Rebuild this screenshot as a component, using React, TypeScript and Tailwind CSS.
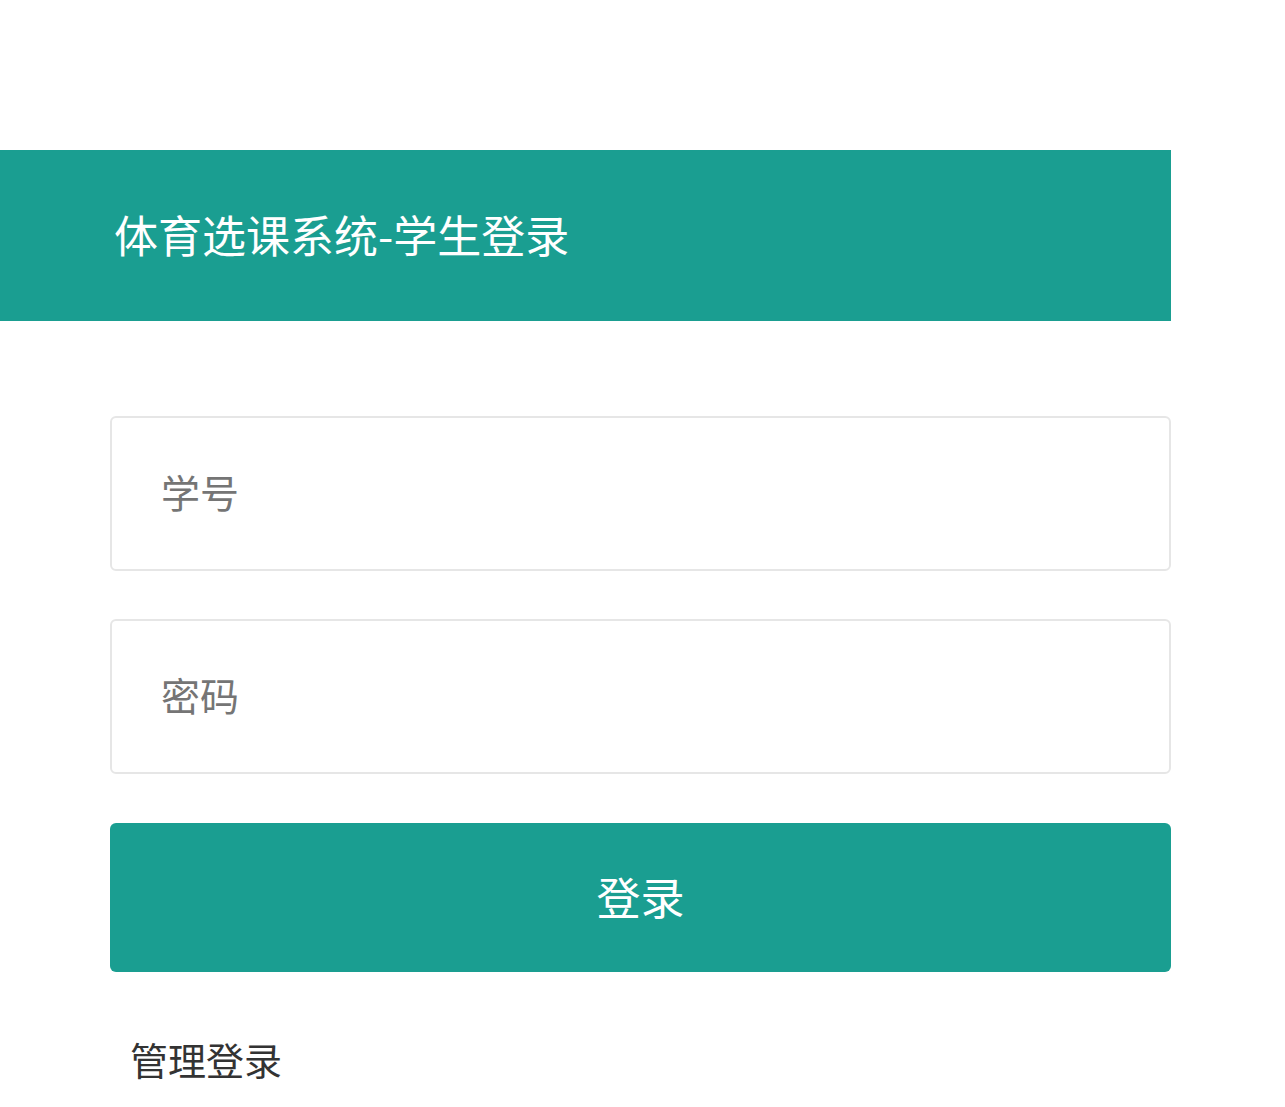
export default function App() {
  return (
    <div
      className="min-h-[1107px] bg-white pt-[150px]"
      style={{ fontFamily: '"Noto Sans CJK SC", "Liberation Sans", sans-serif' }}
    >
      <div className="w-[1171px]">
        <div className="flex h-[171px] items-center bg-[#1a9e91] pl-[114px]">
          <h1 className="-mt-[3px] text-[44px] leading-none text-white">体育选课系统-学生登录</h1>
        </div>

        <form className="ml-[110px] mt-[95px] flex flex-col" onSubmit={(e) => e.preventDefault()}>
          <input
            type="text"
            placeholder="学号"
            className="h-[155px] rounded-[6px] border-2 border-[#e6e6e6] pb-[6px] pl-[49px] text-[39px] text-[#333] outline-none placeholder:text-[#757575]"
          />
          <input
            type="password"
            placeholder="密码"
            className="mt-[48px] h-[155px] rounded-[6px] border-2 border-[#e6e6e6] pb-[6px] pl-[49px] text-[39px] text-[#333] outline-none placeholder:text-[#757575]"
          />
          <button
            type="submit"
            className="mt-[49px] h-[149px] rounded-[6px] bg-[#1a9e91] pb-[4px] text-[44px] text-white"
          >
            登录
          </button>
          <a href="#" className="ml-[20px] mt-[68px] text-[38px] leading-none text-[#333]">
            管理登录
          </a>
        </form>
      </div>
    </div>
  );
}
